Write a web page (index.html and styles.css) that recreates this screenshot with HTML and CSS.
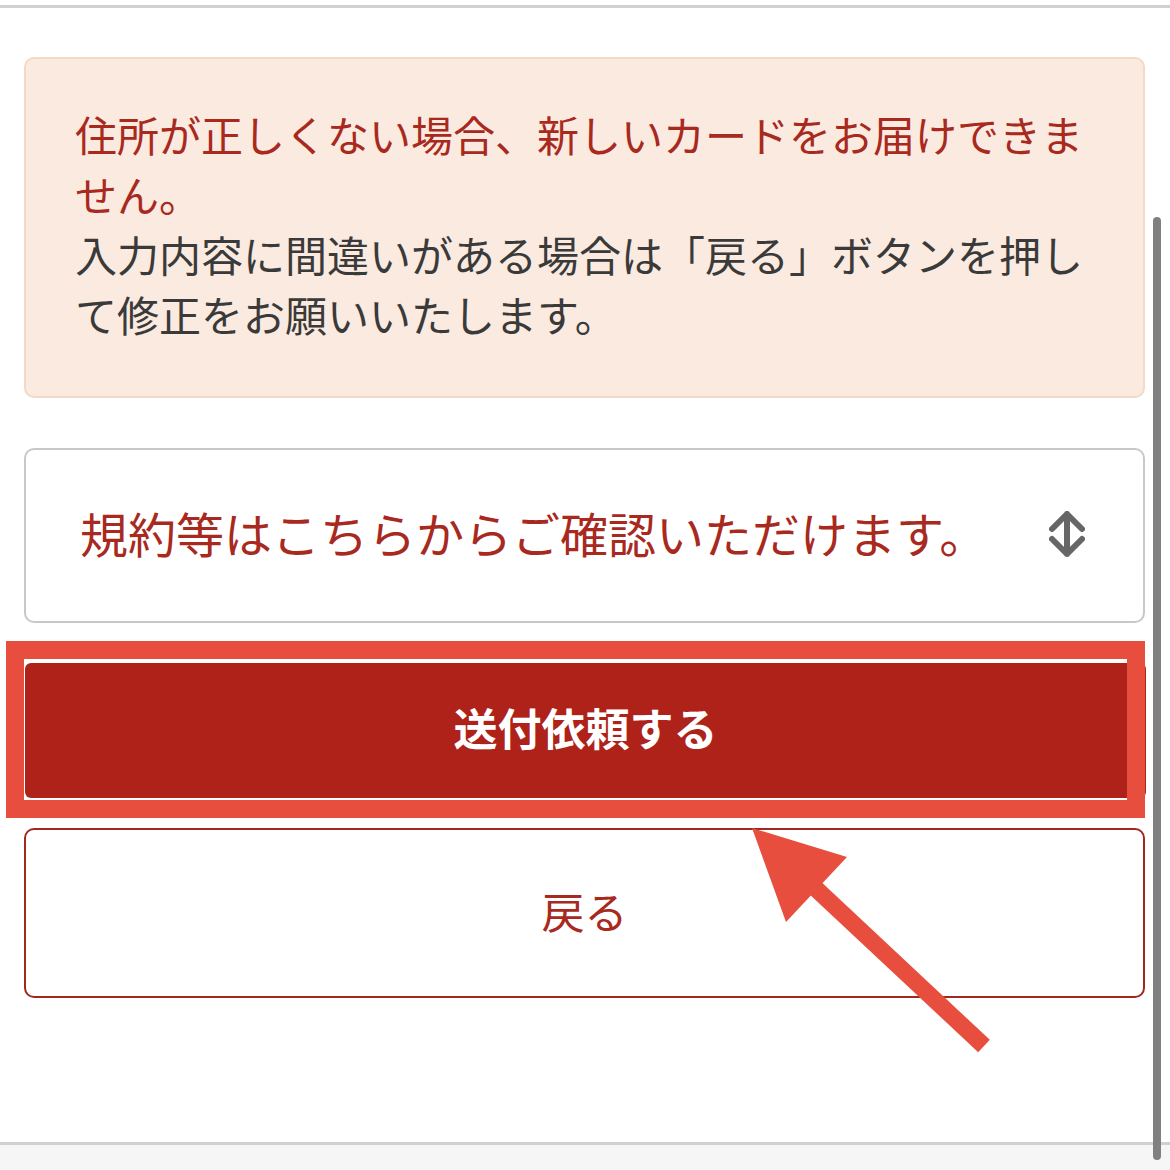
FILE: index.html
```html
<!DOCTYPE html>
<html lang="ja">
<head>
  <meta charset="UTF-8" />
  <meta name="viewport" content="width=device-width, initial-scale=1.0"/>
  <title>送付依頼</title>
  <link rel="stylesheet" href="styles.css">
</head>
<body>
  <div class="top-bar"></div>

  <main class="content">
    <div class="notice">
      <p class="notice-warn">住所が正しくない場合、新しいカードをお届けできません。</p>
      <p class="notice-info">入力内容に間違いがある場合は「戻る」ボタンを押して修正をお願いいたします。</p>
    </div>

    <div class="terms">
      <span class="terms-label">規約等はこちらからご確認いただけます。</span>
      <svg class="terms-icon" width="36" height="46" viewBox="0 0 36 46">
        <path d="M3 18 L18 3 L33 18 M18 3 L18 43 M3 28 L18 43 L33 28" fill="none" stroke="#666" stroke-width="6" stroke-linecap="round" stroke-linejoin="round"/>
      </svg>
    </div>

    <div class="submit-wrap">
      <button class="btn-submit">送付依頼する</button>
      <div class="highlight"></div>
    </div>

    <button class="btn-back">戻る</button>
  </main>

  <div class="bottom-bar"></div>
  <div class="scrollbar"></div>

  <svg class="annotation" width="1170" height="1170" viewBox="0 0 1170 1170">
    <polygon points="752,828 847,857 786,922" fill="#e84e3d"/>
    <line x1="812" y1="885" x2="984" y2="1046" stroke="#e84e3d" stroke-width="17"/>
  </svg>
</body>
</html>
```

FILE: styles.css
```css
:root {
  --red-text: #a8291e;
  --red-btn: #ae2219;
  --mark: #e84e3d;
  --ink: #3a3a3a;
  --notice-bg: #fbeadf;
  --notice-border: #f3dac7;
  --line: #d0d0d0;
}

html, body {
  margin: 0;
  padding: 0;
  background: #fff;
  font-family: "Noto Sans CJK JP", "Noto Sans", sans-serif;
}

body {
  position: relative;
  display: flex;
  flex-direction: column;
  height: 1170px;
  overflow: hidden;
}

.top-bar {
  height: 5px;
  border-bottom: 3px solid var(--line);
}

.content {
  flex: 1;
  padding: 49px 25px 0 24px;
}

.notice {
  background: var(--notice-bg);
  border: 2px solid var(--notice-border);
  border-radius: 10px;
  padding: 45px 51px 52px 49px;
  font-size: 42px;
  line-height: 60px;
}

.notice p {
  margin: 0;
}

.notice-warn {
  color: var(--red-text);
}

.notice-info {
  color: var(--ink);
}

.terms {
  margin-top: 50px;
  height: 171px;
  border: 2px solid #c8c8c8;
  border-radius: 10px;
  display: flex;
  align-items: center;
  justify-content: space-between;
  padding: 0 58px 0 54px;
}

.terms-label {
  color: var(--red-text);
  font-size: 48px;
  line-height: 60px;
  padding-bottom: 8px;
}

.terms-icon {
  display: block;
  margin-bottom: 4px;
}

.submit-wrap {
  position: relative;
  margin-top: 40px;
  margin-left: 1px;
  margin-right: -1px;
}

button {
  font: inherit;
  cursor: pointer;
  display: block;
  width: 100%;
}

.btn-submit {
  height: 135px;
  border: none;
  border-radius: 6px;
  background: var(--red-btn);
  color: #fff;
  font-size: 44px;
  font-weight: bold;
  line-height: 60px;
  padding-bottom: 9px;
}

.highlight {
  position: absolute;
  top: -22px;
  bottom: -20px;
  left: -19px;
  right: 1px;
  border: 18px solid var(--mark);
}

.btn-back {
  margin-top: 30px;
  height: 170px;
  border: 2px solid #a0291f;
  border-radius: 10px;
  background: #fff;
  color: var(--red-text);
  font-size: 43px;
  line-height: 60px;
  padding-bottom: 8px;
}

.bottom-bar {
  height: 25px;
  border-top: 3px solid var(--line);
  background: #f6f6f6;
}

.scrollbar {
  position: absolute;
  top: 217px;
  left: 1153px;
  width: 8px;
  height: 943px;
  border-radius: 4px;
  background: #808080;
}

.annotation {
  position: absolute;
  top: 0;
  left: 0;
  pointer-events: none;
}
```
